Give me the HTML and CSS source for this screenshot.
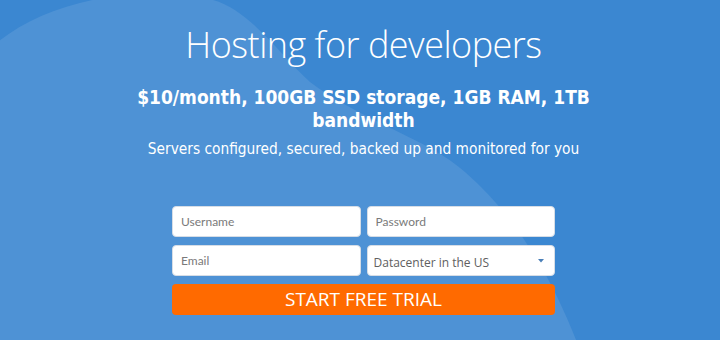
FILE: index.html
```html
<!DOCTYPE html>
<html lang="en">
<head>
<meta charset="utf-8">
<title>Hosting for developers</title>
<link rel="stylesheet" href="styles.css">
</head>
<body>
<section class="hero">
  <svg class="blob" viewBox="0 0 720 340" preserveAspectRatio="none" aria-hidden="true">
    <path d="M-20 60 C20 10 120 -20 213 0 C250 10 280 55 310 82 C360 120 430 140 465 172 C520 220 555 285 578 345 L-20 345 Z" fill="#4e92d5"/>
  </svg>
  <div class="content">
    <h1 class="title">Hosting for developers</h1>
    <h2 class="offer">$10/month, 100GB SSD storage, 1GB RAM, 1TB bandwidth</h2>
    <p class="tagline">Servers configured, secured, backed up and monitored for you</p>
    <form class="signup">
      <div class="fields">
        <input class="field" type="text" placeholder="Username">
        <input class="field" type="password" placeholder="Password">
        <input class="field" type="email" placeholder="Email">
        <div class="select-wrap">
          <select class="field select">
            <option>Datacenter in the US</option>
          </select>
          <svg class="caret" viewBox="0 0 6 4" aria-hidden="true"><path d="M0 0 H6 L3 3.5 Z" fill="#4a7fb8"/></svg>
        </div>
      </div>
      <button class="cta" type="button">START FREE TRIAL</button>
    </form>
  </div>
</section>
</body>
</html>
```

FILE: styles.css
```css
* { box-sizing: border-box; }
html, body { margin: 0; padding: 0; }
body { background: #3b87d1; }
.hero {
  position: relative;
  width: 720px;
  height: 340px;
  overflow: hidden;
  background: #3b87d1;
  color: #fff;
}
.blob {
  position: absolute;
  left: 0;
  top: 0;
  width: 720px;
  height: 340px;
}
.content {
  position: relative;
  display: flex;
  flex-direction: column;
  align-items: center;
  padding-left: 7px;
  padding-top: 22px;
}
.title {
  margin: 0;
  font-family: "Open Sans", sans-serif;
  font-weight: 300;
  font-size: 36px;
  line-height: 46px;
  letter-spacing: -0.5px;
}
.offer {
  margin: 18px 0 0;
  width: 470px;
  text-align: center;
  font-family: "DejaVu Sans Condensed", "DejaVu Sans", sans-serif;
  font-stretch: condensed;
  font-weight: 700;
  font-size: 19px;
  line-height: 23px;
}
.tagline {
  margin: 6px 0 0;
  font-family: "DejaVu Sans Condensed", "DejaVu Sans", sans-serif;
  font-stretch: condensed;
  font-size: 15.3px;
  line-height: 22px;
}
.signup {
  margin-top: 46px;
  width: 383px;
  display: flex;
  flex-direction: column;
  gap: 8px;
}
.fields {
  display: grid;
  grid-template-columns: 1fr 1fr;
  column-gap: 6px;
  row-gap: 8px;
}
.field {
  width: 100%;
  height: 31px;
  margin: 0;
  border: 1px solid #d6dde6;
  border-radius: 4px;
  background: #fff;
  padding: 0 8px;
  font-family: Lato, "Open Sans", sans-serif;
  font-size: 12px;
  color: #666;
  outline: none;
}
.field::placeholder { color: #7a7a7a; }
.select-wrap { position: relative; }
.select {
  appearance: none;
  -webkit-appearance: none;
  padding: 4px 6px 0;
  font-family: "Open Sans", sans-serif;
  color: #606060;
}
.caret {
  position: absolute;
  right: 11px;
  top: 14px;
  width: 6px;
  height: 4px;
}
.cta {
  height: 31px;
  border: none;
  border-radius: 4px;
  background: #ff6a00;
  color: #fff;
  font-family: "Open Sans", sans-serif;
  font-size: 19px;
  padding: 0;
  line-height: 31px;
}
```
